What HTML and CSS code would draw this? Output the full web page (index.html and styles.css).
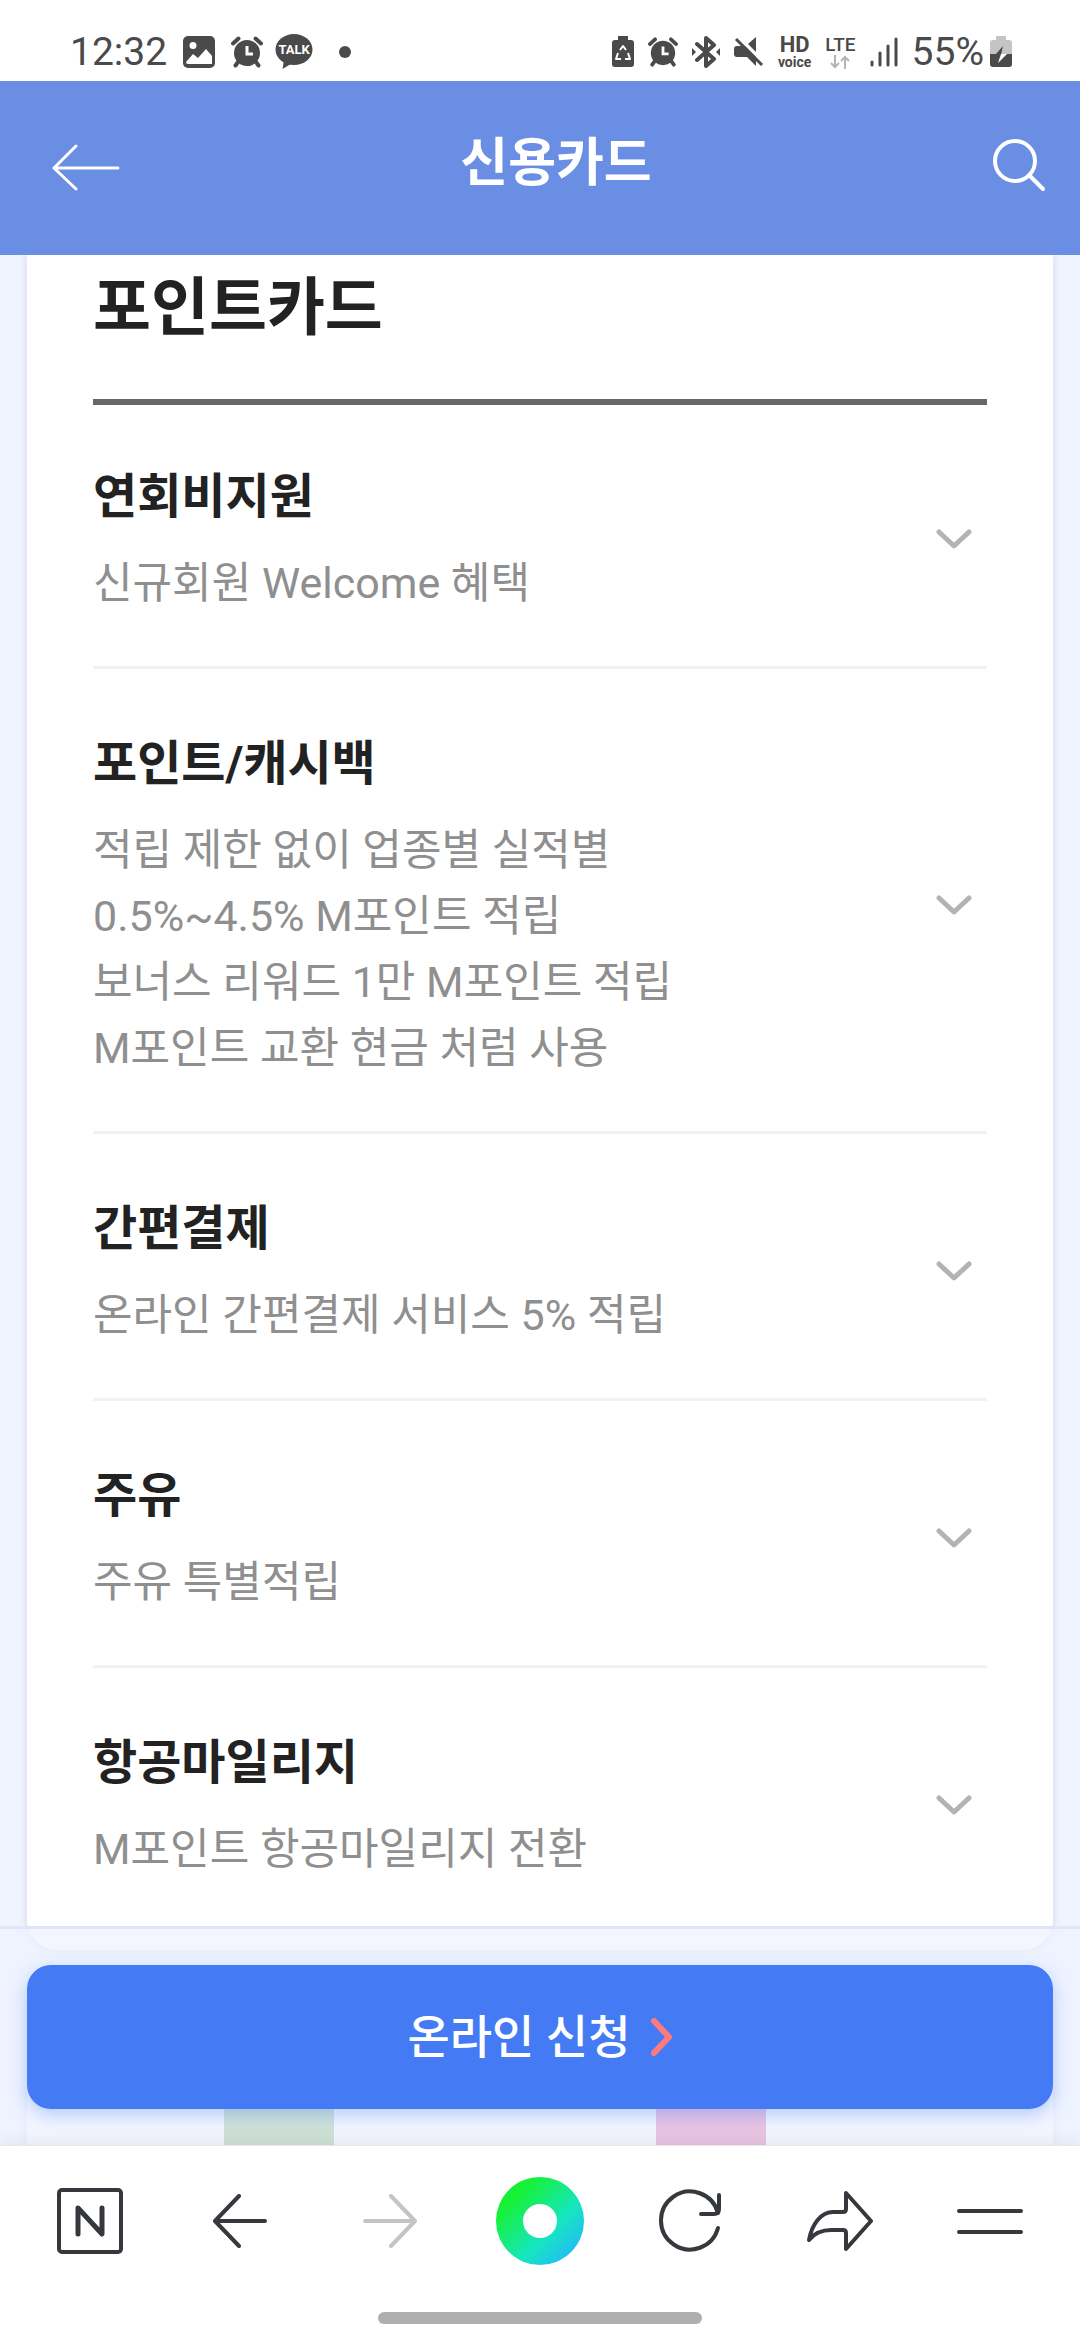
FILE: index.html
```html
<!DOCTYPE html>
<html lang="ko">
<head>
<meta charset="utf-8">
<meta name="viewport" content="width=device-width, initial-scale=1">
<title>신용카드</title>
<link rel="stylesheet" href="styles.css">
</head>
<body>
<svg class="sprite" aria-hidden="true">
  <symbol id="alarm" viewBox="0 0 32 32">
    <circle cx="16" cy="17" r="13" fill="currentColor"/>
    <path d="M2 7.500L7.500 2.500M30 7.500L24.500 2.500M7 26L4.500 29.500M25 26l2.500 3.500" stroke="currentColor" stroke-width="4" stroke-linecap="round"/>
    <path d="M16 10v8h6" fill="none" stroke="#fff" stroke-width="3"/>
  </symbol>
  <symbol id="chevron" viewBox="0 0 36 22">
    <path d="M3 3l15 14L33 3" fill="none" stroke="currentColor" stroke-width="5" stroke-linecap="round" stroke-linejoin="round"/>
  </symbol>
</svg>
<div class="app">
  <div class="status">
    <div class="status-left">
      <span class="clock">12:32</span>
      <svg width="32" height="32" viewBox="0 0 32 32"><rect x="0" y="0" width="32" height="32" rx="5" fill="currentColor"/><circle cx="10" cy="9.500" r="3.500" fill="#fff"/><path d="M3 26l7-8 5 4 8-9 6 7v8H5q-2 0-2-2z" fill="#fff"/></svg>
      <svg width="32" height="32"><use href="#alarm"/></svg>
      <span class="talk">
        <svg width="38" height="36" viewBox="0 0 38 36"><ellipse cx="19" cy="15.500" rx="18.500" ry="15.500" fill="currentColor"/><path d="M9 26L7.500 35l10-6z" fill="currentColor"/></svg>
        <b>TALK</b>
      </span>
      <svg class="dot" width="12" height="12" viewBox="0 0 12 12"><circle cx="6" cy="6" r="6" fill="currentColor"/></svg>
    </div>
    <div class="status-right">
      <svg width="22" height="32" viewBox="0 0 22 32"><path d="M6 0h10v4h3q3 0 3 3v21q0 3-3 3H3q-3 0-3-3V7q0-3 3-3h3z" fill="currentColor"/><path d="M8 14l3-4 3 4M16 17l2 6h-5M6 17l-2 6h5" fill="none" stroke="#fff" stroke-width="2" stroke-linejoin="round"/></svg>
      <svg width="30" height="30"><use href="#alarm"/></svg>
      <svg width="28" height="32" viewBox="0 0 28 32"><path d="M5 8l17 15-8 7V2l8 7L5 24" fill="none" stroke="currentColor" stroke-width="4" stroke-linecap="round" stroke-linejoin="round"/><path d="M0 12l4 4-4 4zM28 12l-4 4 4 4z" fill="currentColor"/></svg>
      <svg width="30" height="30" viewBox="0 0 30 30"><path d="M3 9h8l11 11v9l-9-9H3q-3 0-3-3v-5q0-3 3-3zM22 0v15l-8-8z" fill="currentColor"/><path d="M2 2l26 26" stroke="currentColor" stroke-width="3"/></svg>
      <span class="hd"><b>HD</b><small>voice</small></span>
      <span class="lte"><b>LTE</b><svg width="20" height="14" viewBox="0 0 20 14"><path d="M5 0v12M1 8l4 4 4-4M15 14V2M11 6l4-4 4 4" fill="none" stroke="#b5b5b5" stroke-width="2"/></svg></span>
      <svg width="28" height="30" viewBox="0 0 28 30"><path d="M2 25v3M10 16v12M18 9v19M26 2v26" stroke="currentColor" stroke-width="3" stroke-linecap="round"/></svg>
      <span class="power"><span class="clock">55%</span>
      <svg width="22" height="32" viewBox="0 0 22 32"><path d="M6 0h10v4h3q3 0 3 3v11H0V7q0-3 3-3h3z" fill="#c4c4c4"/><path d="M0 18h22v10q0 3-3 3H3q-3 0-3-3z" fill="currentColor"/><path d="M13 10L5 19h6z" fill="currentColor"/><path d="M8 27l3-9h6z" fill="#fff"/></svg></span>
    </div>
  </div>

  <header class="header">
    <button class="icon-btn" type="button" aria-label="뒤로">
      <svg width="68" height="48" viewBox="0 0 68 48"><path d="M66 24H2M24 2L2 24l22 21" fill="none" stroke="#fff" stroke-width="3" stroke-linecap="round" stroke-linejoin="round"/></svg>
    </button>
    <h1>신용카드</h1>
    <button class="icon-btn" type="button" aria-label="검색">
      <svg width="54" height="58" viewBox="0 0 54 58"><circle cx="23" cy="22" r="20" fill="none" stroke="#fff" stroke-width="4"/><path d="M37 36l14 14" stroke="#fff" stroke-width="4" stroke-linecap="round"/></svg>
    </button>
  </header>

  <main class="content">
    <section class="card">
      <h2>포인트카드</h2>
      <ul class="benefits">
        <li><button type="button" aria-expanded="false"><span class="text"><strong>연회비지원</strong><span>신규회원 Welcome 혜택</span></span><svg class="chev" width="36" height="22"><use href="#chevron"/></svg></button></li>
        <li><button type="button" aria-expanded="false"><span class="text"><strong>포인트/캐시백</strong><span>적립 제한 없이 업종별 실적별<br>0.5%~4.5% M포인트 적립<br>보너스 리워드 1만 M포인트 적립<br>M포인트 교환 현금 처럼 사용</span></span><svg class="chev" width="36" height="22"><use href="#chevron"/></svg></button></li>
        <li><button type="button" aria-expanded="false"><span class="text"><strong>간편결제</strong><span>온라인 간편결제 서비스 5% 적립</span></span><svg class="chev" width="36" height="22"><use href="#chevron"/></svg></button></li>
        <li><button type="button" aria-expanded="false"><span class="text"><strong>주유</strong><span>주유 특별적립</span></span><svg class="chev" width="36" height="22"><use href="#chevron"/></svg></button></li>
        <li><button type="button" aria-expanded="false"><span class="text"><strong>항공마일리지</strong><span>M포인트 항공마일리지 전환</span></span><svg class="chev" width="36" height="22"><use href="#chevron"/></svg></button></li>
      </ul>
    </section>
    <section class="card next">
      <div class="thumb green"></div>
      <div class="thumb pink"></div>
    </section>
    <div class="cta">
      <button type="button">온라인 신청
        <svg width="22" height="38" viewBox="0 0 22 38"><path d="M3 3l15 16L3 35" fill="none" stroke="#fd7b7e" stroke-width="6" stroke-linecap="round" stroke-linejoin="round"/></svg>
      </button>
    </div>
  </main>

  <footer class="browser">
    <nav class="tools">
      <button type="button" aria-label="홈"><svg width="66" height="66" viewBox="0 0 66 66"><rect x="2" y="2" width="62" height="62" rx="3"/><path d="M21 46V20l24 26V20" stroke-width="5"/></svg></button>
      <button type="button" aria-label="이전"><svg width="54" height="54" viewBox="0 0 54 54"><path d="M52 27H3M26 2L2 27l24 25"/></svg></button>
      <button type="button" aria-label="다음" disabled><svg width="54" height="54" viewBox="0 0 54 54"><path d="M2 27h49M28 2l24 25-24 25"/></svg></button>
      <button type="button" aria-label="그린닷"><span class="green-dot"></span></button>
      <button type="button" aria-label="새로고침"><svg width="64" height="64" viewBox="0 0 64 64"><path d="M60 39A29 29 0 1 1 60 24M61 6v14q0 5-5 5H43"/></svg></button>
      <button type="button" aria-label="공유"><svg width="66" height="62" viewBox="0 0 66 62"><path d="M39 3l25 28-25 28V43q0-3-3-3H24Q10 40 2 50C5 34 14 22 26 22h10q3 0 3-3z"/></svg></button>
      <button type="button" aria-label="메뉴"><svg width="66" height="66" viewBox="0 0 66 66"><path d="M2 23h62M2 44h62"/></svg></button>
    </nav>
    <div class="gesture"></div>
  </footer>
</div>
</body>
</html>
```
FILE: styles.css
```css
* {
  box-sizing: border-box;
}

body {
  margin: 0;
  background: #eff4fe;
  font-family: Roboto, "Noto Sans CJK KR", sans-serif;
  color: #222;
}

button {
  margin: 0;
  padding: 0;
  border: 0;
  background: none;
  color: inherit;
  font: inherit;
}

svg {
  display: block;
  flex: none;
}

.sprite {
  position: absolute;
  width: 0;
  height: 0;
}

.app {
  display: flex;
  flex-direction: column;
  height: 100vh;
}

/* System status bar */
.status {
  display: flex;
  justify-content: space-between;
  align-items: center;
  padding: 22px 68px 0 70px;
  height: 81px;
  background: #fff;
  color: #4a4a4a;
}

.status-left,
.status-right {
  display: flex;
  align-items: center;
  gap: 16px;
}

.status-right {
  gap: 14px;
}

.clock {
  font-size: 39px;
  line-height: 40px;
}

.talk {
  position: relative;
  margin-left: -4px;
}

.talk b {
  position: absolute;
  inset: 0;
  color: #fff;
  font-size: 13px;
  line-height: 32px;
  text-align: center;
}

.dot {
  margin-left: 10px;
}

.hd,
.lte {
  display: flex;
  flex-direction: column;
  align-items: center;
}

.hd b {
  font-size: 22px;
  line-height: 20px;
}

.hd small {
  font-size: 14px;
  font-weight: 700;
  line-height: 14px;
}

.lte b {
  font-size: 19px;
  font-weight: 500;
  line-height: 20px;
}

.power {
  display: flex;
  align-items: center;
  gap: 6px;
}

/* Page header */
.header {
  display: flex;
  justify-content: space-between;
  align-items: center;
  flex: none;
  height: 174px;
  padding: 0 34px 0 52px;
  background: #698ee3;
  color: #fff;
}

.header h1 {
  margin: 0;
  padding-bottom: 8px;
  font-size: 52px;
  font-weight: 700;
  line-height: 64px;
}

.content {
  position: relative;
  flex: 1;
  min-height: 0;
  overflow: hidden;
  padding: 0 27px;
}

.card {
  padding: 11px 66px 18px;
  border-radius: 0 0 30px 30px;
  background: #fff;
  box-shadow: 0 0 8px rgba(60, 70, 110, 0.16);
}

.card h2 {
  margin: 0;
  padding-bottom: 49px;
  border-bottom: 6px solid #686868;
  font-size: 63px;
  font-weight: 700;
  line-height: 84px;
}

.benefits {
  margin: -3px 0 0;
  padding: 0;
  list-style: none;
}

.benefits li + li {
  border-top: 3px solid #eff3f6;
}

.benefits button {
  display: flex;
  justify-content: space-between;
  align-items: center;
  width: 100%;
  padding: 62px 15px 50px 0;
  text-align: left;
}

.text {
  display: flex;
  flex-direction: column;
  gap: 20px;
  color: #8f8f8f;
  font-size: 43px;
  line-height: 66px;
}

.text strong {
  color: #222;
  font-size: 48px;
  font-weight: 700;
}

.chev {
  color: #b3b3b3;
}

.next {
  display: grid;
  grid-template-columns: 1fr 1fr;
  justify-items: center;
  margin-top: 27px;
  padding: 90px 126px 0 36px;
  border-radius: 30px;
}

.thumb {
  width: 110px;
  height: 200px;
}

.green {
  background: #86bd77;
}

.pink {
  background: #da599e;
}

/* Apply bar, floating over the content */
.cta {
  position: absolute;
  inset: auto 0 0;
  padding: 36px 27px;
  border-top: 3px solid #e0e6f8;
  background: rgba(238, 242, 255, 0.7);
}

.cta button {
  display: flex;
  justify-content: center;
  align-items: center;
  gap: 20px;
  width: 100%;
  padding: 40px 0;
  border-radius: 24px;
  background: #447bf4;
  box-shadow: 0 6px 18px rgba(68, 123, 244, 0.35);
  color: #fff;
  font-size: 46px;
  font-weight: 500;
  line-height: 64px;
}

/* Browser toolbar */
.browser {
  position: relative;
  flex: none;
  padding: 0 15px 16px;
  border-top: 1px solid #e6e8ec;
  background: #fff;
  box-shadow: 0 -2px 18px rgba(0, 0, 0, 0.07);
}

.tools {
  display: grid;
  grid-template-columns: repeat(7, 1fr);
  height: 150px;
}

.tools button {
  display: flex;
  justify-content: center;
  align-items: center;
  color: #35383d;
}

.tools button:disabled {
  color: #c4c4c4;
}

.tools svg {
  fill: none;
  stroke: currentColor;
  stroke-width: 4;
  stroke-linecap: round;
  stroke-linejoin: round;
}

.green-dot {
  width: 88px;
  height: 88px;
  border: 27px solid transparent;
  border-radius: 50%;
  background: linear-gradient(#fff, #fff) padding-box, linear-gradient(135deg, #17f135 22%, #16e5c2 62%, #23bdf4 88%) border-box;
}

.gesture {
  width: 30%;
  min-width: 324px;
  height: 12px;
  margin: 16px auto 0;
  border-radius: 6px;
  background: #afafaf;
}
```
